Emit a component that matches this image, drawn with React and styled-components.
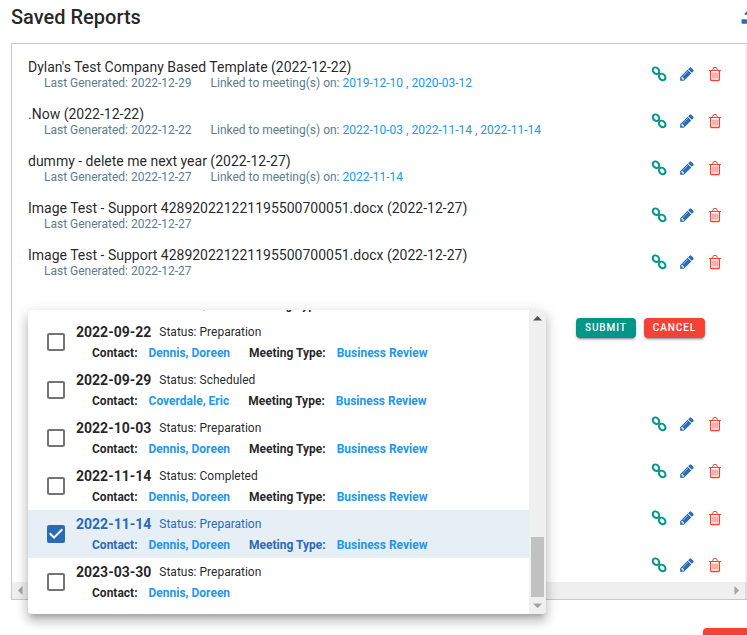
import React from "react";
import styled, { createGlobalStyle, css } from "styled-components";

const GlobalStyle = createGlobalStyle`
  *, *::before, *::after { box-sizing: border-box; }
  body {
    margin: 0;
    overflow: hidden;
    background: #fff;
    color: rgba(0, 0, 0, 0.87);
    font-family: Roboto, "Liberation Sans", sans-serif;
    font-size: 14px;
  }
`;

const teal = "#009688";
const red = "#f44336";
const blue = "#2a6ab6";
const link = "#2196f3";

const Page = styled.main`
  position: relative;
  width: calc(100% + 16px);
  height: 100vh;
  padding-left: 11px;
`;

const Header = styled.header`
  display: flex;
  align-items: center;
  justify-content: space-between;
  height: 34px;
  margin-bottom: 9px;
  padding-right: 6px;
`;

const Title = styled.h1`
  margin: 0;
  font-size: 20px;
  line-height: 32px;
  font-weight: 500;
`;

const IconButton = styled.button`
  display: flex;
  width: 16px;
  height: 16px;
  padding: 0;
  border: 0;
  background: none;
  color: ${(p) => p.$color};
  cursor: pointer;
`;

const Glyph = styled.svg`
  display: block;
  width: 16px;
  height: 16px;
`;

const Panel = styled.section`
  display: grid;
  grid-template-columns: 1fr 17px;
  border: 1px solid #c8c9cd;
`;

const ReportList = styled.ul`
  max-height: 538px;
  margin: 0;
  padding: 7px 0 0;
  overflow: hidden;
  list-style: none;
`;

const Row = styled.li`
  display: flex;
  justify-content: space-between;
  min-height: ${(p) => (p.$editing ? 115 : 47)}px;
  padding: ${(p) => (p.$editing ? "32px 40px 0 16px" : "8px 22px 7px 16px")};
`;

const RowTitle = styled.div`
  line-height: 16px;
`;

const RowMeta = styled.div`
  display: flex;
  gap: 19px;
  padding-left: 16px;
  color: #607d8b;
  font-size: 12px;
  line-height: 16px;
`;

const Link = styled.a`
  color: ${link};
  text-decoration: none;
`;

const Actions = styled.div`
  display: flex;
  gap: ${(p) => p.$gap}px;
  align-items: flex-start;
  margin-left: auto;
  padding-top: ${(p) => p.$inset || 0}px;
`;

const Button = styled.button`
  height: 20px;
  padding: 0 9px;
  border: 0;
  border-radius: 4px;
  background: ${(p) => p.$color};
  color: #fff;
  font: 500 10px/20px Roboto, "Liberation Sans", sans-serif;
  letter-spacing: 0.09em;
  text-transform: uppercase;
  box-shadow: 0 3px 1px -2px rgba(0, 0, 0, 0.2), 0 2px 2px rgba(0, 0, 0, 0.14),
    0 1px 5px rgba(0, 0, 0, 0.12);
`;

const FooterButton = styled(Button)`
  width: 60px;
  height: 28px;
`;

const Footer = styled.footer`
  display: flex;
  justify-content: flex-end;
  margin-top: 28px;
`;

const Track = styled.div`
  display: flex;
  flex-direction: ${(p) => (p.$horizontal ? "row" : "column")};
  align-items: center;
  justify-content: space-between;
  background: #f0f0f0;
  ${(p) => (p.$horizontal ? css`height: 17px;` : css`width: 17px;`)}
`;

const Corner = styled.div`
  background: #dcdcdc;
`;

const Arrow = styled.svg`
  display: block;
  width: 17px;
  height: 17px;
  fill: ${(p) => p.$color};
`;

const Thumb = styled.div`
  width: 13px;
  height: 60px;
  margin-top: auto;
  background: #c1c1c1;
`;

const Menu = styled.div`
  position: absolute;
  top: 310px;
  left: 28px;
  display: grid;
  grid-template-columns: 1fr 17px;
  width: 518px;
  height: 304px;
  border-radius: 4px;
  overflow: hidden;
  background: #fff;
  box-shadow: 0 5px 5px -3px rgba(0, 0, 0, 0.2), 0 8px 10px 1px rgba(0, 0, 0, 0.14),
    0 3px 14px 2px rgba(0, 0, 0, 0.12);
`;

const MeetingList = styled.ul`
  display: flex;
  flex-direction: column;
  justify-content: flex-end;
  min-height: 0;
  margin: 0;
  padding: 0 0 8px;
  overflow: hidden;
  list-style: none;
`;

const Meeting = styled.li`
  flex: none;
  display: flex;
  align-items: center;
  gap: 11px;
  height: 48px;
  padding: 0 19px;
  ${(p) => p.$selected && css`
    background: #e6eef6;
    color: ${blue};
  `}
`;

const CheckCell = styled.span`
  display: grid;
  > * { grid-area: 1 / 1; }
`;

const Checkbox = styled.input`
  appearance: none;
  width: 18px;
  height: 18px;
  margin: 0;
  border: 2px solid #757575;
  border-radius: 2px;
  &:checked {
    border-color: ${blue};
    background: ${blue};
  }
`;

const Tick = styled.svg`
  width: 18px;
  height: 18px;
  fill: #fff;
  pointer-events: none;
`;

const MeetingText = styled.div`
  align-self: flex-end;
  padding-bottom: 2px;
`;

const MeetingHead = styled.label`
  display: flex;
  align-items: center;
  gap: 8px;
  font-size: 12px;
  line-height: 20px;
`;

const MeetingDate = styled.strong`
  font-size: 14px;
  font-weight: 700;
`;

const MeetingFacts = styled.div`
  display: flex;
  padding-left: 16px;
  font-size: 12px;
  line-height: 22px;
  font-weight: 700;
`;

const Fact = styled.span`
  display: flex;
  gap: 11px;
  margin-right: 19px;
`;

const filled = {
  pencil: "M491 1536l91-91-235-235-91 91v107h128v128h107zm523-928q0-22-22-22-10 0-17 7l-542 542q-7 7-7 17 0 22 22 22 10 0 17-7l542-542q7-7 7-17zm-54-192l416 416-832 832h-416v-416zm683 96q0 53-37 90l-166 166-416-416 166-165q36-38 90-38 53 0 91 38l235 234q37 39 37 91z",
  upload: "M1344 1472q0-26-19-45t-45-19-45 19-19 45 19 45 45 19 45-19 19-45zm256 0q0-26-19-45t-45-19-45 19-19 45 19 45 45 19 45-19 19-45zm128-224v320q0 40-28 68t-68 28h-1472q-40 0-68-28t-28-68v-320q0-40 28-68t68-28h427q21 56 70.5 92t110.5 36h256q61 0 110.5-36t70.5-92h427q40 0 68 28t28 68zm-325-648q-17 40-59 40h-256v448q0 26-19 45t-45 19h-256q-26 0-45-19t-19-45v-448h-256q-42 0-59-40-17-39 14-69l448-448q18-19 45-19t45 19l448 448q31 30 14 69z",
};

const arrows = {
  up: "M4 10.5 8.5 6 13 10.5z",
  down: "M4 6.5 8.5 11 13 6.5z",
  left: "M10.5 4 6 8.5 10.5 13z",
  right: "M6.5 4 11 8.5 6.5 13z",
};

function LinkGlyph() {
  return (
    <Glyph viewBox="0 0 16 16" fill="none" stroke="currentColor" strokeWidth="2" aria-hidden="true">
      <ellipse cx="5" cy="4.7" rx="3.6" ry="2.9" transform="rotate(45 5 4.7)" />
      <ellipse cx="11.2" cy="10.9" rx="3.6" ry="2.9" transform="rotate(45 11.2 10.9)" />
    </Glyph>
  );
}

function TrashGlyph() {
  return (
    <Glyph viewBox="0 0 16 16" fill="none" stroke="currentColor" aria-hidden="true">
      <path d="M2 4.5h12M5.5 4.5l.8-2.5q.2-.5.7-.5h2q.5 0 .7.5l.8 2.5" />
      <path strokeWidth="1.3" d="M3.6 4.5v9q0 1 1 1h6.8q1 0 1-1v-9" />
      <path opacity="0.85" d="M6 6.5v6M8 6.5v6M10 6.5v6" />
    </Glyph>
  );
}

function Icon({ name, label, color }) {
  return (
    <IconButton type="button" aria-label={label} $color={color}>
      {name === "link" && <LinkGlyph />}
      {name === "trash" && <TrashGlyph />}
      {filled[name] && (
        <Glyph viewBox="0 0 1792 1792" fill="currentColor" aria-hidden="true">
          <path d={filled[name]} />
        </Glyph>
      )}
    </IconButton>
  );
}

function ScrollArrow({ dir, color = "#a3a3a3" }) {
  return (
    <Arrow viewBox="0 0 17 17" $color={color} aria-hidden="true">
      <path d={arrows[dir]} />
    </Arrow>
  );
}

const reports = [
  { title: "Dylan's Test Company Based Template (2022-12-22)", generated: "2022-12-29", linked: ["2019-12-10", "2020-03-12"] },
  { title: ".Now (2022-12-22)", generated: "2022-12-22", linked: ["2022-10-03", "2022-11-14", "2022-11-14"] },
  { title: "dummy - delete me next year (2022-12-27)", generated: "2022-12-27", linked: ["2022-11-14"] },
  { title: "Image Test - Support 428920221221195500700051.docx (2022-12-27)", generated: "2022-12-27" },
  { title: "Image Test - Support 428920221221195500700051.docx (2022-12-27)", generated: "2022-12-27" },
  { editing: true },
  {},
  {},
  {},
  {},
];

const meetings = [
  { contact: "Coverdale, Eric", type: "Business Review" },
  { date: "2022-09-22", status: "Preparation", contact: "Dennis, Doreen", type: "Business Review" },
  { date: "2022-09-29", status: "Scheduled", contact: "Coverdale, Eric", type: "Business Review" },
  { date: "2022-10-03", status: "Preparation", contact: "Dennis, Doreen", type: "Business Review" },
  { date: "2022-11-14", status: "Completed", contact: "Dennis, Doreen", type: "Business Review" },
  { date: "2022-11-14", status: "Preparation", contact: "Dennis, Doreen", type: "Business Review", selected: true },
  { date: "2023-03-30", status: "Preparation", contact: "Dennis, Doreen" },
];

function Report({ report }) {
  if (report.editing) {
    return (
      <Row $editing>
        <Actions $gap={8}>
          <Button type="button" $color={teal}>Submit</Button>
          <Button type="button" $color={red}>Cancel</Button>
        </Actions>
      </Row>
    );
  }
  return (
    <Row>
      {report.title && (
        <div>
          <RowTitle>{report.title}</RowTitle>
          <RowMeta>
            <span>Last Generated: {report.generated}</span>
            {report.linked && (
              <span>
                Linked to meeting(s) on:{" "}
                {report.linked.map((date, i) => (
                  <Link href="#" key={i}>{i > 0 && " , "}{date}</Link>
                ))}
              </span>
            )}
          </RowMeta>
        </div>
      )}
      <Actions $gap={12} $inset={7}>
        <Icon name="link" label="Link" color={teal} />
        <Icon name="pencil" label="Edit" color={blue} />
        <Icon name="trash" label="Delete" color={red} />
      </Actions>
    </Row>
  );
}

function MeetingOption({ meeting, id }) {
  return (
    <Meeting $selected={meeting.selected}>
      <CheckCell>
        <Checkbox
          type="checkbox"
          id={id}
          aria-label={meeting.date ? undefined : meeting.contact}
          defaultChecked={meeting.selected}
        />
        {meeting.selected && (
          <Tick viewBox="3 3 18 18" aria-hidden="true">
            <path d="M10 17 5 12l1.41-1.42L10 14.17l7.59-7.59L19 8z" />
          </Tick>
        )}
      </CheckCell>
      <MeetingText>
        {meeting.date && (
          <MeetingHead htmlFor={id}>
            <MeetingDate>{meeting.date}</MeetingDate>
            <span>Status: {meeting.status}</span>
          </MeetingHead>
        )}
        <MeetingFacts>
          <Fact>Contact: <Link href="#">{meeting.contact}</Link></Fact>
          {meeting.type && (
            <Fact>Meeting Type: <Link href="#">{meeting.type}</Link></Fact>
          )}
        </MeetingFacts>
      </MeetingText>
    </Meeting>
  );
}

export default function App() {
  return (
    <>
      <GlobalStyle />
      <Page>
        <Header>
          <Title>Saved Reports</Title>
          <Icon name="upload" label="Upload" color={blue} />
        </Header>
        <Panel>
          <ReportList>
            {reports.map((report, i) => <Report key={i} report={report} />)}
          </ReportList>
          <Track />
          <Track $horizontal>
            <ScrollArrow dir="left" />
            <ScrollArrow dir="right" />
          </Track>
          <Corner />
        </Panel>
        <Footer>
          <FooterButton type="button" $color={red} aria-label="Close" />
        </Footer>
        <Menu>
          <MeetingList>
            {meetings.map((meeting, i) => (
              <MeetingOption key={i} id={`meeting-${i}`} meeting={meeting} />
            ))}
          </MeetingList>
          <Track>
            <ScrollArrow dir="up" color="#505050" />
            <Thumb />
            <ScrollArrow dir="down" />
          </Track>
        </Menu>
      </Page>
    </>
  );
}
